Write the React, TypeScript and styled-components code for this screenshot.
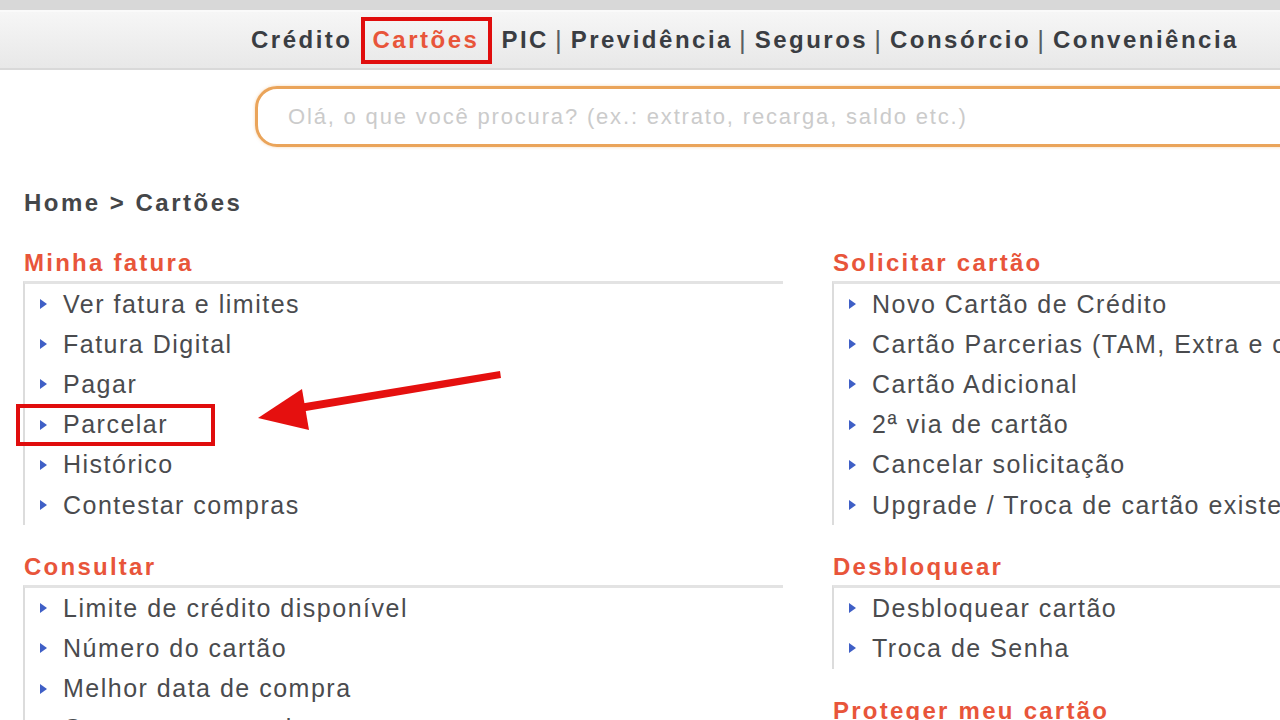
import React from "react";
import styled, { createGlobalStyle } from "styled-components";

const GlobalStyle = createGlobalStyle`
  html, body { margin: 0; padding: 0; background: #fff; }
  body {
    font-family: "Liberation Sans", Arial, Helvetica, sans-serif;
    overflow: hidden;
    width: 1280px;
    height: 720px;
  }
  * { box-sizing: border-box; }
`;

const Page = styled.div`
  position: relative;
  width: 1280px;
  height: 720px;
  overflow: hidden;
`;

const TopStrip = styled.div`
  height: 12px;
  background: #d8d8d8;
  border-bottom: 2px solid #fafafa;
`;

const NavBar = styled.nav`
  height: 58px;
  display: flex;
  align-items: center;
  padding-left: 251px;
  background: linear-gradient(#f6f6f6, #e8e8e8);
  border-bottom: 2px solid #d9d9d9;
  white-space: nowrap;
`;

const NavItem = styled.span<{ $active?: boolean }>`
  font-size: 24px;
  font-weight: bold;
  letter-spacing: 2.5px;
  color: ${(p) => (p.$active ? "#e8553a" : "#3a3d42")};
  ${(p) =>
    p.$active
      ? `border: 4px solid #e00d0d; padding: 5px 9px 6px 8px; margin: 0 9px 0 8px;`
      : ``}
`;

const NavSep = styled.span`
  font-size: 26px;
  color: #5a5d62;
  margin: 0 9px 0 6px;
`;

const SearchBox = styled.div`
  margin: 16px 0 0 255px;
  width: 1100px;
  height: 61px;
  border: 3px solid #eaa45a;
  border-radius: 22px;
  display: flex;
  align-items: center;
  padding-left: 30px;
  box-shadow: 0 0 3px rgba(240, 170, 90, 0.5);
`;

const Placeholder = styled.span`
  font-size: 22px;
  letter-spacing: 1.83px;
  color: #cbcbcb;
  white-space: nowrap;
`;

const Breadcrumb = styled.div`
  margin: 42px 0 0 24px;
  height: 28px;
  line-height: 28px;
  font-size: 24px;
  font-weight: bold;
  letter-spacing: 2.5px;
  color: #444649;
`;

const Columns = styled.div`
  display: grid;
  grid-template-columns: 760px 760px;
  column-gap: 49px;
  margin: 32px 0 0 23px;
`;

const Column = styled.div`
  display: flex;
  flex-direction: column;
`;

const Section = styled.section<{ $first?: boolean }>`
  margin-top: ${(p) => (p.$first ? 0 : 28)}px;
`;

const SectionTitle = styled.h2`
  margin: 0 0 4px 1px;
  height: 28px;
  line-height: 28px;
  font-size: 24px;
  font-weight: bold;
  letter-spacing: 2.25px;
  color: #e8553a;
  white-space: nowrap;
`;

const List = styled.ul`
  margin: 0;
  padding: 0 0 0 15px;
  list-style: none;
  border-top: 3px solid #e3e3e3;
  border-left: 2px solid #dcdcdc;
`;

const Item = styled.li`
  position: relative;
  height: 40.2px;
  display: flex;
  align-items: center;
  gap: 16px;
  font-size: 25px;
  letter-spacing: 1.5px;
  color: #4a4b4e;
  white-space: nowrap;
`;

const Bullet = styled.span`
  width: 0;
  height: 0;
  border-top: 5px solid transparent;
  border-bottom: 5px solid transparent;
  border-left: 7px solid #3f5fc6;
  flex: none;
`;

const Highlight = styled.span`
  position: absolute;
  left: -24px;
  top: -1px;
  width: 199px;
  height: 42px;
  border: 4px solid #e00d0d;
  pointer-events: none;
`;

const Overlay = styled.svg`
  position: absolute;
  left: 0;
  top: 0;
  pointer-events: none;
`;

type Sec = { title: string; items: string[] };

const left: Sec[] = [
  {
    title: "Minha fatura",
    items: [
      "Ver fatura e limites",
      "Fatura Digital",
      "Pagar",
      "Parcelar",
      "Histórico",
      "Contestar compras",
    ],
  },
  {
    title: "Consultar",
    items: [
      "Limite de crédito disponível",
      "Número do cartão",
      "Melhor data de compra",
      "Compras no exterior",
    ],
  },
];

const right: Sec[] = [
  {
    title: "Solicitar cartão",
    items: [
      "Novo Cartão de Crédito",
      "Cartão Parcerias (TAM, Extra e outros)",
      "Cartão Adicional",
      "2ª via de cartão",
      "Cancelar solicitação",
      "Upgrade / Troca de cartão existente",
    ],
  },
  {
    title: "Desbloquear",
    items: ["Desbloquear cartão", "Troca de Senha"],
  },
  {
    title: "Proteger meu cartão",
    items: ["Seguro Cartão Protegido"],
  },
];

const renderCol = (secs: Sec[]) =>
  secs.map((s, i) => (
    <Section key={s.title} $first={i === 0}>
      <SectionTitle>{s.title}</SectionTitle>
      <List>
        {s.items.map((it) => (
          <Item key={it}>
            <Bullet />
            {it}
            {it === "Parcelar" && <Highlight />}
          </Item>
        ))}
      </List>
    </Section>
  ));

export default function App() {
  return (
    <Page>
      <GlobalStyle />
      <TopStrip />
      <NavBar>
        <NavItem>Crédito</NavItem>
        <NavItem $active>Cartões</NavItem>
        <NavItem>PIC</NavItem>
        <NavSep>|</NavSep>
        <NavItem>Previdência</NavItem>
        <NavSep>|</NavSep>
        <NavItem>Seguros</NavItem>
        <NavSep>|</NavSep>
        <NavItem>Consórcio</NavItem>
        <NavSep>|</NavSep>
        <NavItem>Conveniência</NavItem>
      </NavBar>
      <SearchBox>
        <Placeholder>Olá, o que você procura? (ex.: extrato, recarga, saldo etc.)</Placeholder>
      </SearchBox>
      <Breadcrumb>Home &gt; Cartões</Breadcrumb>
      <Columns>
        <Column>{renderCol(left)}</Column>
        <Column>{renderCol(right)}</Column>
      </Columns>
      <Overlay width="1280" height="720" viewBox="0 0 1280 720">
        <path d="M500 371 L299 404 L300 412 L501 378 Z" fill="#e5100f" />
        <polygon points="258,418 302,389 309,430" fill="#e5100f" />
      </Overlay>
    </Page>
  );
}
